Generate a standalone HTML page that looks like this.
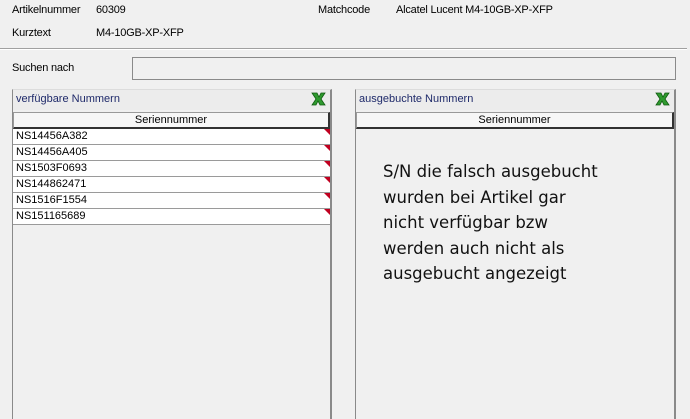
<!DOCTYPE html>
<html><head><meta charset="utf-8"><style>
*{margin:0;padding:0;box-sizing:border-box}
body{width:690px;height:408px;background:#f0f0f0;position:relative;overflow:hidden;font-family:"Liberation Sans",sans-serif;font-size:11px;color:#000}
.a{position:absolute;white-space:nowrap;letter-spacing:-0.2px}
.panel{position:absolute;top:89px;height:330px;border-left:1px solid #8a8a8a;border-right:2px solid #8a8a8a;border-top:1px solid #dcdcdc}
.ph{height:20px;background:#ececec;color:#1f2a6a;padding:3px 0 0 3px;position:relative}
.gh{height:17px;margin-top:2px;background:#f7f7f7;border:1px solid #9a9a9a;border-right:2px solid #333;border-bottom:2px solid #333;text-align:center;line-height:14px}
.row{height:16px;background:#fff;border-bottom:1px solid #9a9a9a;padding-left:3px;line-height:15px;position:relative}
.row:after{content:"";position:absolute;right:0;top:0;border-top:6px solid #c00020;border-left:6px solid transparent}
.x{position:absolute;right:4px;top:2px}
.big{position:absolute;left:383px;top:159px;font-family:"DejaVu Sans",sans-serif;font-size:16.5px;line-height:25.5px;color:#111}
</style></head><body>
<div class="a" style="left:12px;top:4px">Artikelnummer</div>
<div class="a" style="left:96px;top:4px">60309</div>
<div class="a" style="left:318px;top:4px">Matchcode</div>
<div class="a" style="left:396px;top:4px">Alcatel Lucent M4-10GB-XP-XFP</div>
<div class="a" style="left:12px;top:27px">Kurztext</div>
<div class="a" style="left:96px;top:27px">M4-10GB-XP-XFP</div>
<div style="position:absolute;left:0;top:48px;width:687px;height:2px;border-top:1px solid #a0a0a0;border-bottom:1px solid #fff"></div>
<div class="a" style="left:12px;top:62px">Suchen nach</div>
<div style="position:absolute;left:132px;top:57px;width:544px;height:23px;border:1px solid #8a8a8a;background:#f0f0f0"></div>

<div class="panel" style="left:12px;width:320px">
<div class="ph">verfügbare Nummern<svg class="x" width="15" height="14" viewBox="0 0 15 14"><path d="M1 1h5l2 4 2-4h4l-4 6 4 6H9L7 9l-2 4H1l4-6z" fill="#2f9a2f" stroke="#105a10" stroke-width=".8"/></svg></div>
<div class="gh">Seriennummer</div>
<div class="row">NS14456A382</div>
<div class="row">NS14456A405</div>
<div class="row">NS1503F0693</div>
<div class="row">NS144862471</div>
<div class="row">NS1516F1554</div>
<div class="row">NS151165689</div>
</div>

<div class="panel" style="left:355px;width:321px">
<div class="ph">ausgebuchte Nummern<svg class="x" width="15" height="14" viewBox="0 0 15 14"><path d="M1 1h5l2 4 2-4h4l-4 6 4 6H9L7 9l-2 4H1l4-6z" fill="#2f9a2f" stroke="#105a10" stroke-width=".8"/></svg></div>
<div class="gh">Seriennummer</div>
</div>
<div class="big">S/N die falsch ausgebucht<br>wurden bei Artikel gar<br>nicht verfügbar bzw<br>werden auch nicht als<br>ausgebucht angezeigt</div>
</body></html>
